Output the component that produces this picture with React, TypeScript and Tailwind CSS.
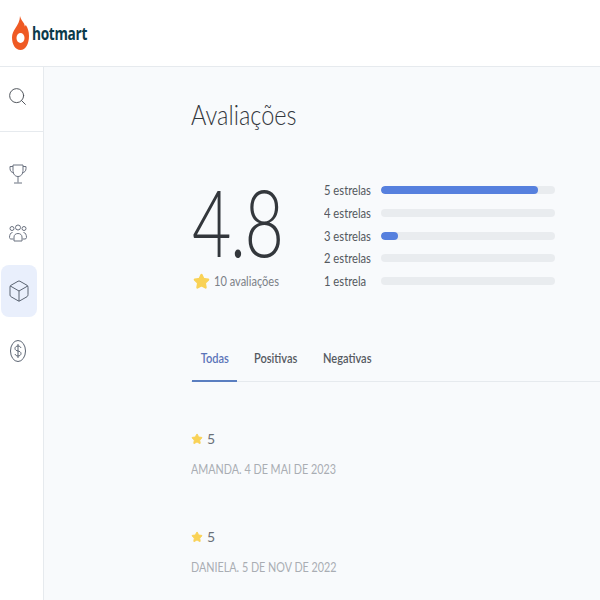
import { Search, Box, Star } from "lucide-react";

const BARS = [
  { label: "5 estrelas", pct: 90 },
  { label: "4 estrelas", pct: 0 },
  { label: "3 estrelas", pct: 10 },
  { label: "2 estrelas", pct: 0 },
  { label: "1 estrela", pct: 0 },
];

const REVIEWS = ["AMANDA. 4 DE MAI DE 2023", "DANIELA. 5 DE NOV DE 2022"];

function Flame() {
  return (
    <svg width="17" height="34" viewBox="0 0 17 34" fill="none">
      <path
        d="M8 0c.5 3 2.500 5 4 7.500.5 1 .7 2 .8 3l1-1.500c2 3 3.200 6.500 3.200 11C17 28 13.500 34 8.500 34S0 28.500 0 21.500c0-4 1.500-6.500 3.500-9.500C5.500 9 8 5 8 0z"
        fill="#ef5a24"
      />
      <ellipse cx="8.500" cy="22" rx="4" ry="5" fill="#fff" />
    </svg>
  );
}

function Trophy() {
  return (
    <svg width="18" height="20" viewBox="0 0 18 20" fill="none" stroke="#6b7280" strokeWidth="1">
      <path d="M4 1h10v5.500c0 3.500-2 6-5 6s-5-2.500-5-6z" />
      <path d="M4 2.500H1v2c0 2.500 1.500 4 4 4.500" />
      <path d="M14 2.500h3v2c0 2.500-1.500 4-4 4.500" />
      <path d="M9 12.500v6M5 19h8" />
    </svg>
  );
}

function Team() {
  return (
    <svg width="18" height="18" viewBox="0 0 18 18" fill="none" stroke="#6b7280" strokeWidth="1">
      <circle cx="9" cy="3.500" r="2.500" />
      <circle cx="3" cy="4.500" r="2" />
      <circle cx="15" cy="4.500" r="2" />
      <path d="M5 17v-4c0-2 1.600-3.500 4-3.500s4 1.500 4 3.500v4z" />
      <path d="M4.500 15H2c-.8 0-1.500-.6-1.500-1.500C.5 11 1.500 8.500 3.500 8.500" />
      <path d="M13.500 15H16c.8 0 1.500-.6 1.500-1.500 0-2.500-1-5-3-5" />
    </svg>
  );
}

function Money() {
  return (
    <svg width="16" height="22" viewBox="0 0 16 22" fill="none" stroke="#5b6472" strokeWidth="1">
      <ellipse cx="8" cy="11" rx="7.500" ry="10.500" />
      <path d="M11 8c-.4-1.300-1.500-2-3-2-1.700 0-3 1-3 2.400C5 12 11 10 11 13.600 11 15 9.700 16 8 16c-1.500 0-2.600-.7-3-2" />
      <path d="M8 4v14" />
    </svg>
  );
}

export default function App() {
  return (
    <div className="h-[600px] w-[600px] overflow-hidden bg-white font-['Lato',sans-serif] text-[#3f4348]">
      <header className="flex h-[67px] items-center border-b border-[#e6eaee] pl-[12px]">
        <Flame />
        <span className="ml-[3px] mt-[0px] inline-block origin-left scale-x-[0.76] text-[18px] font-bold leading-none tracking-[-0.4px] text-[#0b3a4a] font-['Open_Sans',sans-serif]">
          hotmart
        </span>
      </header>
      <div className="flex h-[533px]">
        <aside className="flex w-[44px] shrink-0 flex-col items-center border-r border-[#e6eaee] bg-white">
          <div className="flex h-[65px] w-full items-center justify-center border-b border-[#e6eaee] pr-[9px] pb-[5px]">
            <Search size={21} strokeWidth={1.1} className="text-[#4b5057]" />
          </div>
          <div className="mt-[31px] flex h-[22px] w-full items-center justify-center pr-[7px]">
            <Trophy />
          </div>
          <div className="mt-[37px] flex h-[22px] w-full items-center justify-center pr-[7px]">
            <Team />
          </div>
          <div className="mt-[21px] ml-px flex h-[52px] w-[36px] items-center justify-center self-start rounded-lg bg-[#e9effc]">
            <Box size={24} strokeWidth={1} className="text-[#5b6472]" />
          </div>
          <div className="mt-[23px] flex h-[22px] w-full items-center justify-center pr-[7px]">
            <Money />
          </div>
        </aside>
        <main className="flex-1 overflow-hidden bg-[#f8fafc] pl-[147px]">
          <h1 className="mt-[29px] origin-left scale-x-[0.84] whitespace-nowrap text-[28px] font-light leading-[36px] text-[#33373c]">
            Avaliações
          </h1>
          <div className="mt-[48px] flex">
            <div className="w-[133px]">
              <div className="ml-px origin-left scale-x-[0.74] text-[92px] font-light leading-[84px] tracking-[-2px] text-[#33373c]">
                4.8
              </div>
              <div className="mt-[7px] flex items-center">
                <Star size={17} className="ml-[2px] fill-[#f9d256] text-[#f9d256]" />
                <span className="ml-[4px] origin-left scale-x-[0.79] whitespace-nowrap text-[14px] leading-[20px] text-[#7b8087]">10 avaliações</span>
              </div>
            </div>
            <div className="flex flex-col gap-[2.75px]">
              {BARS.map((b) => (
                <div key={b.label} className="flex h-[20px] items-center">
                  <span className="w-[57px] origin-left scale-x-[0.8] whitespace-nowrap text-[14px] leading-[20px] text-[#55595f]">{b.label}</span>
                  <div className="h-[8px] w-[174px] overflow-hidden rounded-full bg-[#e9ecef]">
                    <div className="h-full rounded-full bg-[#5680de]" style={{ width: `${b.pct}%` }} />
                  </div>
                </div>
              ))}
            </div>
          </div>
          <div className="mt-[54px] flex border-b border-[#e6eaee] text-[14px] font-semibold leading-[20px]">
            <div className="-mb-px ml-px w-[45px] border-b-2 border-[#5a7ec0] pb-[12px] pt-[3px] text-center text-[#5a73b8]">
              <span className="inline-block scale-x-[0.79]">Todas</span>
            </div>
            <span className="ml-[17px] w-[44px] origin-left scale-x-[0.79] whitespace-nowrap pt-[3px] text-[#55595f]">Positivas</span>
            <span className="ml-[25px] origin-left scale-x-[0.79] whitespace-nowrap pt-[3px] text-[#55595f]">Negativas</span>
          </div>
          {REVIEWS.map((r, i) => (
            <div key={r} className={i === 0 ? "mt-[47px]" : "mt-[48px]"}>
              <div className="flex items-center">
                <Star size={12} className="fill-[#f9d256] text-[#f9d256]" />
                <span className="ml-[4px] text-[14px] leading-[20px] text-[#6b7077]">5</span>
              </div>
              <div className="mt-[10px] origin-left scale-x-[0.77] whitespace-nowrap text-[14px] leading-[20px] text-[#a9adb3]">{r}</div>
            </div>
          ))}
        </main>
      </div>
    </div>
  );
}
